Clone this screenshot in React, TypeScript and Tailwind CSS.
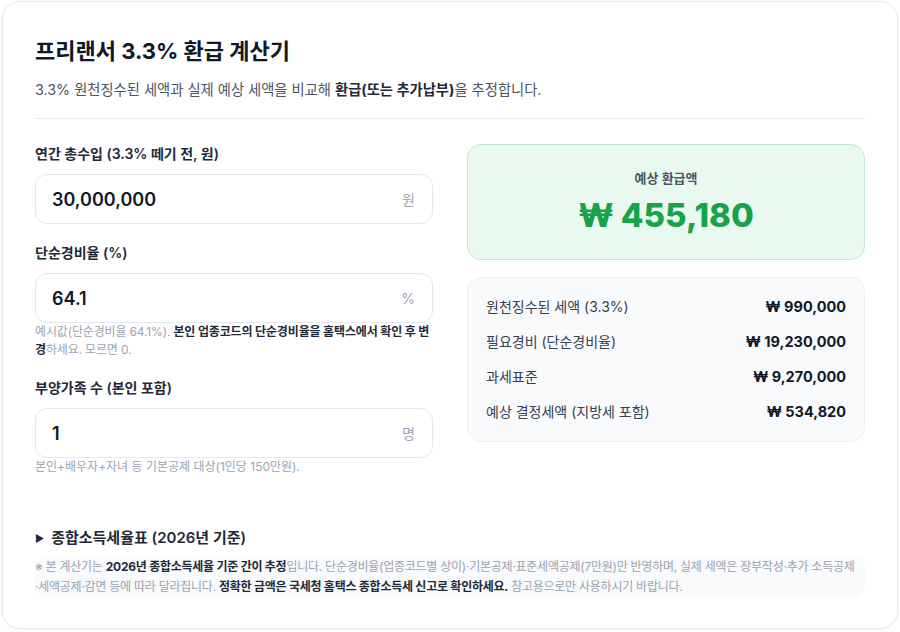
import React from "react";

const font = { fontFamily: "Inter, 'Noto Sans CJK KR', 'Noto Sans', sans-serif" };

function Field({
  label,
  value,
  unit,
  children,
}: {
  label: string;
  value: string;
  unit: string;
  children?: React.ReactNode;
}) {
  return (
    <div className="flex flex-col">
      <label className="text-[14px] leading-[20px] font-semibold text-[#1f2937] mb-[10px]">{label}</label>
      <div className="h-[50px] rounded-[12px] border border-[#e5e7eb] bg-white flex items-center justify-between pl-[16px] pr-[17px]">
        <span className="text-[18px] font-semibold text-[#111827]">{value}</span>
        <span className="text-[14px] text-[#9ca3af]">{unit}</span>
      </div>
      {children}
    </div>
  );
}

function Row({ label, value }: { label: string; value: string }) {
  return (
    <div className="flex items-center justify-between leading-[20px]">
      <span className="text-[14px] text-[#374151]">{label}</span>
      <span className="text-[14.5px] font-bold text-[#111827]">{value}</span>
    </div>
  );
}

export default function App() {
  return (
    <div className="w-[900px] h-[632px] bg-white overflow-hidden" style={font}>
      <div className="ml-[2px] mt-[1px] w-[896px] rounded-[18px] border border-[#e8eaee] bg-white shadow-[0_1px_3px_rgba(0,0,0,0.05)] px-[32px] pt-[33px] pb-[31px]">
        <h1 className="text-[22px] leading-[32px] font-bold text-[#111827]">프리랜서 3.3% 환급 계산기</h1>
        <p className="mt-[13px] text-[14.3px] leading-[20px] text-[#4b5563]">
          3.3% 원천징수된 세액과 실제 예상 세액을 비교해 <b className="font-bold text-[#1f2937]">환급(또는 추가납부)</b>을 추정합니다.
        </p>
        <div className="mt-[18px] h-px bg-[#e6efeb]" />

        <div className="mt-[25px] grid grid-cols-2 gap-x-[34px] items-start">
          <div className="flex flex-col gap-[19px]">
            <Field label="연간 총수입 (3.3% 떼기 전, 원)" value="30,000,000" unit="원" />
            <Field label="단순경비율 (%)" value="64.1" unit="%">
              <p className="text-[12px] leading-[18px] tracking-[-0.15px] text-[#9ca3af] whitespace-nowrap">
                예시값(단순경비율 64.1%). <b className="font-bold text-[#1f2937]">본인 업종코드의 단순경비율을 홈택스에서 확인 후 변</b>
                <br />
                <b className="font-bold text-[#1f2937]">경</b>하세요. 모르면 0.
              </p>
            </Field>
            <Field label="부양가족 수 (본인 포함)" value="1" unit="명">
              <p className="text-[12px] leading-[18px] text-[#9ca3af]">본인+배우자+자녀 등 기본공제 대상(1인당 150만원).</p>
            </Field>
          </div>

          <div className="flex flex-col gap-[17px]">
            <div className="h-[116px] rounded-[14px] border border-[#bfe8ce] bg-[#e9f9ef] flex flex-col items-center pt-[23px]">
              <span className="text-[13px] leading-[20px] font-semibold text-[#4b5563]">예상 환급액</span>
              <span className="mt-[7px] text-[33px] leading-[40px] font-extrabold text-[#16a34a]">₩ 455,180</span>
            </div>
            <div className="rounded-[14px] border border-[#eef0f3] bg-[#f8fafc] px-[18px] py-[19px] flex flex-col gap-[15px]">
              <Row label="원천징수된 세액 (3.3%)" value="₩ 990,000" />
              <Row label="필요경비 (단순경비율)" value="₩ 19,230,000" />
              <Row label="과세표준" value="₩ 9,270,000" />
              <Row label="예상 결정세액 (지방세 포함)" value="₩ 534,820" />
            </div>
          </div>
        </div>

        <div className="mt-[51px] flex items-center gap-[7px] leading-[22px] text-[#1f2937]">
          <span className="text-[10px]">▶</span>
          <span className="text-[15px] font-semibold">종합소득세율표 (2026년 기준)</span>
        </div>
        <div className="mt-[8px] rounded-[10px] bg-[#f8fafc] text-[12px] leading-[20px] tracking-[-0.25px] text-[#9ca3af] whitespace-nowrap">
          ※ 본 계산기는 <b className="font-bold text-[#1f2937]">2026년 종합소득세율 기준 간이 추정</b>입니다. 단순경비율(업종코드별 상이)·기본공제·표준세액공제(7만원)만 반영하며, 실제 세액은 장부작성·추가 소득공제
          <br />
          ·세액공제·감면 등에 따라 달라집니다. <b className="font-bold text-[#1f2937]">정확한 금액은 국세청 홈택스 종합소득세 신고로 확인하세요.</b> 참고용으로만 사용하시기 바랍니다.
        </div>
      </div>
    </div>
  );
}
